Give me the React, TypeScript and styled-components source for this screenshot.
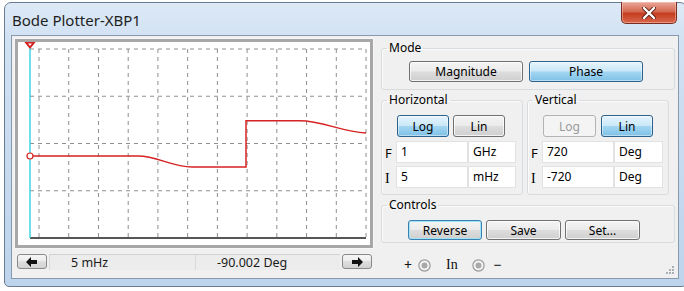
import React from 'react';
import styled, { createGlobalStyle } from 'styled-components';

type Variant = 'normal' | 'active' | 'disabled' | 'default';

const GlobalStyle = createGlobalStyle`
  html, body {
    margin: 0;
    padding: 0;
    background: #ffffff;
    overflow: hidden;
  }
  body {
    width: 684px;
    height: 291px;
  }
`;

const Window = styled.div`
  margin: 2px 0 0 4px;
  width: 683px;
  height: 285px;
  box-sizing: border-box;
  border: 1px solid #6a7c90;
  border-radius: 7px 7px 5px 5px;
  background: linear-gradient(180deg, #dde9f6 0%, #d0e1f3 14%, #bdd4ec 100%);
  display: flex;
  flex-direction: column;
  font-family: 'Noto Sans', 'Open Sans', sans-serif;
  color: #000;
`;

const TitleBar = styled.div`
  height: 32px;
  display: flex;
  align-items: flex-start;
`;

const Title = styled.div`
  margin: 7px 0 0 7px;
  font-size: 15px;
  line-height: 20px;
  color: #1e1e1e;
`;

const CloseButton = styled.div`
  margin: -1px 9px 0 auto;
  width: 56px;
  height: 22px;
  box-sizing: border-box;
  border: 1px solid #7a2d1f;
  border-top: none;
  border-radius: 0 0 5px 5px;
  background: linear-gradient(180deg, #e9a899 0%, #d46a52 45%, #c43d20 55%, #d9684c 100%);
  box-shadow: inset 0 0 0 1px rgba(255, 210, 200, 0.45);
  display: flex;
  align-items: center;
  justify-content: center;
`;

const Client = styled.div`
  margin: 0 7px 0 6px;
  height: 244px;
  box-sizing: border-box;
  border: 1px solid #8799ad;
  background: #f0f0f0;
  display: flex;
  padding: 3px;
`;

const PlotColumn = styled.div`
  width: 358px;
  display: flex;
  flex-direction: column;
`;

const PlotBox = styled.div`
  height: 209px;
  box-sizing: border-box;
  border: 3px solid #a7a7a7;
  background: #ffffff;
  box-shadow: 0 0 0 1px #f7f7f7;
`;

const BottomBar = styled.div`
  margin: 6px 0 0 2px;
  height: 16px;
  display: flex;
  gap: 2px;
`;

const ArrowButton = styled.div`
  width: 30px;
  height: 15px;
  box-sizing: border-box;
  border: 1px solid #8a8a8a;
  border-radius: 3px;
  background: linear-gradient(180deg, #f6f6f6 0%, #ececec 50%, #dedede 50%, #d2d2d2 100%);
  display: flex;
  align-items: center;
  justify-content: center;
`;

const ReadoutGroup = styled.div`
  display: flex;
`;

const Readout = styled.div<{ $w: number }>`
  width: ${({ $w }) => $w}px;
  height: 16px;
  box-sizing: border-box;
  border-top: 1px solid #d2d2d2;
  border-left: 1px solid #d9d9d9;
  background: #ececec;
  padding-left: 21px;
  font-size: 12.5px;
  line-height: 15px;
  color: #1a1a1a;
`;

const ControlColumn = styled.div`
  width: 296px;
  margin: 2px 0 0 8px;
  display: flex;
  flex-direction: column;
`;

const Group = styled.fieldset<{ $mt?: number; $w?: number }>`
  margin: ${({ $mt }) => $mt ?? 0}px 0 0 0;
  padding: 0 4px 0 2px;
  ${({ $w }) => ($w ? `width: ${$w}px;` : '')}
  box-sizing: border-box;
  border: 1px solid #d6dce0;
  border-radius: 3px;
  box-shadow: inset 1px 1px 0 #fbfbfb;
  min-width: 0;
`;

const Legend = styled.legend`
  margin-left: 3px;
  padding: 0 2px;
  font-size: 12px;
  line-height: 14px;
`;

const ButtonRow = styled.div<{ $mt: number; $mb: number; $ml: number; $gap: number }>`
  display: flex;
  gap: ${({ $gap }) => $gap}px;
  margin: ${({ $mt, $mb, $ml }) => `${$mt}px 0 ${$mb}px ${$ml}px`};
`;

const variantStyles: Record<Variant, string> = {
  normal: `
    border-color: #707070;
    background: linear-gradient(180deg, #f4f4f4 0%, #ebebeb 48%, #dddddd 52%, #cfcfcf 100%);
    box-shadow: inset 0 0 0 1px rgba(255,255,255,0.75);
    color: #000;
  `,
  default: `
    border-color: #3c7fb1;
    background: linear-gradient(180deg, #f4f4f4 0%, #ebebeb 48%, #dddddd 52%, #cfcfcf 100%);
    box-shadow: inset 0 0 0 1px #9fe3f8;
    color: #000;
  `,
  active: `
    border-color: #2c628b;
    background: linear-gradient(180deg, #e6f5fd 0%, #c9e8f8 48%, #a3d6f2 52%, #7fc1e6 100%);
    box-shadow: inset 0 0 0 1px rgba(255,255,255,0.45);
    color: #000;
  `,
  disabled: `
    border-color: #b0b4b7;
    background: #f4f4f4;
    box-shadow: none;
    color: #9a9a9a;
  `,
};

const Button = styled.div<{ $variant: Variant; $w: number; $h: number }>`
  width: ${({ $w }) => $w}px;
  height: ${({ $h }) => $h}px;
  box-sizing: border-box;
  border: 1px solid;
  border-radius: 3px;
  display: flex;
  align-items: center;
  justify-content: center;
  font-size: 12px;
  ${({ $variant }) => variantStyles[$variant]}
`;

const AxisRow = styled.div`
  display: flex;
`;

const ScaleGroups = styled.div`
  margin-top: 3px;
  display: flex;
  gap: 4px;
`;

const FieldRow = styled.div<{ $mt: number }>`
  margin-top: ${({ $mt }) => $mt}px;
  display: flex;
  height: 22px;
`;

const RowLabel = styled.div<{ $serif?: boolean }>`
  width: 12px;
  padding-left: 1px;
  box-sizing: border-box;
  font-family: ${({ $serif }) => ($serif ? "'Liberation Serif', serif" : "'Noto Sans', sans-serif")};
  font-size: ${({ $serif }) => ($serif ? 14 : 13)}px;
  line-height: ${({ $serif }) => ($serif ? 26 : 24)}px;
`;

const TextBox = styled.div<{ $w: number }>`
  width: ${({ $w }) => $w}px;
  height: 22px;
  box-sizing: border-box;
  border: 1px solid #e2e2e2;
  background: #ffffff;
  padding-left: 4px;
  font-size: 12px;
  line-height: 19px;
`;

const TerminalRow = styled.div`
  margin-top: 12px;
  height: 20px;
  display: flex;
  align-items: center;
  padding-left: 23px;
`;

const TermText = styled.span<{ $ml: number; $serif?: boolean }>`
  margin-left: ${({ $ml }) => $ml}px;
  font-family: ${({ $serif }) => ($serif ? "'Liberation Serif', serif" : "'Noto Sans', sans-serif")};
  font-size: 14px;
  line-height: 20px;
  color: #111;
`;

const TermIcon = styled.svg<{ $ml: number }>`
  margin-left: ${({ $ml }) => $ml}px;
  display: block;
`;

const Grip = styled.svg`
  margin-left: auto;
  align-self: flex-end;
  display: block;
`;

const GRID_X = Array.from({ length: 12 }, (_, k) => 21 + k * 29.73);
const GRID_Y = [7, 54.25, 101.5, 148.75];

const Plot = () => (
  <svg width={352} height={203} style={{ display: 'block' }}>
    {GRID_X.map((x) => (
      <line key={x} x1={x} y1={7} x2={x} y2={196} stroke="#8f8f8f" strokeDasharray="4 4" />
    ))}
    {GRID_Y.map((y) => (
      <line key={y} x1={12} y1={y} x2={348} y2={y} stroke="#8f8f8f" strokeDasharray="4 4" />
    ))}
    <line x1={12} y1={196} x2={348} y2={196} stroke="#1e1e1e" strokeWidth={1.5} />
    <line x1={12} y1={1} x2={12} y2={196} stroke="#3fd3df" strokeWidth={1.5} />
    <path
      d="M12 114 H120 C139 114, 154 125, 174 125 H228 V78.7 H282 C304 78.7, 324 90, 348 91"
      fill="none"
      stroke="#d62222"
      strokeWidth={1.5}
    />
    <polygon points="8,0.5 16,0.5 12,5.5" fill="#ffffff" stroke="#d62222" strokeWidth={2} />
    <circle cx={12} cy={114} r={3} fill="#ffffff" stroke="#d62222" strokeWidth={1.2} />
  </svg>
);

const Arrow = ({ dir }: { dir: 'left' | 'right' }) => (
  <svg width={12} height={10} viewBox="0 0 12 10">
    <polygon
      points={dir === 'left' ? '0,5 5,0 5,3 11,3 11,7 5,7 5,10' : '12,5 7,0 7,3 1,3 1,7 7,7 7,10'}
      fill="#111"
    />
  </svg>
);

const Terminal = ({ ml }: { ml: number }) => (
  <TermIcon $ml={ml} width={13} height={13} viewBox="0 0 13 13">
    <circle cx={6.5} cy={6.5} r={5.6} fill="#f4f4f4" stroke="#9a9a9a" strokeWidth={1.2} />
    <circle cx={6.5} cy={6.5} r={3} fill="#a9a9a9" />
  </TermIcon>
);

export default function App() {
  return (
    <>
      <GlobalStyle />
      <Window>
        <TitleBar>
          <Title>Bode Plotter-XBP1</Title>
          <CloseButton>
            <svg width={14} height={12} viewBox="0 0 14 12">
              <path d="M2 1 L12 11 M12 1 L2 11" stroke="#5a1d12" strokeWidth={4} strokeLinecap="round" />
              <path d="M2 1 L12 11 M12 1 L2 11" stroke="#ffffff" strokeWidth={2.4} strokeLinecap="round" />
            </svg>
          </CloseButton>
        </TitleBar>
        <Client>
          <PlotColumn>
            <PlotBox>
              <Plot />
            </PlotBox>
            <BottomBar>
              <ArrowButton>
                <Arrow dir="left" />
              </ArrowButton>
              <ReadoutGroup>
                <Readout $w={146}>5 mHz</Readout>
                <Readout $w={145}>-90.002 Deg</Readout>
              </ReadoutGroup>
              <ArrowButton>
                <Arrow dir="right" />
              </ArrowButton>
            </BottomBar>
          </PlotColumn>

          <ControlColumn>
            <Group>
              <Legend>Mode</Legend>
              <ButtonRow $mt={6} $mb={7} $ml={25} $gap={6}>
                <Button $variant="normal" $w={114} $h={21}>Magnitude</Button>
                <Button $variant="active" $w={114} $h={21}>Phase</Button>
              </ButtonRow>
            </Group>

            <ScaleGroups>
              <Group $w={142}>
                <Legend>Horizontal</Legend>
                <ButtonRow $mt={8} $mb={0} $ml={13} $gap={4}>
                  <Button $variant="active" $w={52} $h={22}>Log</Button>
                  <Button $variant="normal" $w={52} $h={22}>Lin</Button>
                </ButtonRow>
                <FieldRow $mt={4}>
                  <RowLabel>F</RowLabel>
                  <TextBox $w={72}>1</TextBox>
                  <TextBox $w={48}>GHz</TextBox>
                </FieldRow>
                <FieldRow $mt={3} style={{ marginBottom: 6 }}>
                  <RowLabel $serif>I</RowLabel>
                  <TextBox $w={72}>5</TextBox>
                  <TextBox $w={48}>mHz</TextBox>
                </FieldRow>
              </Group>
              <Group $w={142}>
                <Legend>Vertical</Legend>
                <ButtonRow $mt={8} $mb={0} $ml={13} $gap={5}>
                  <Button $variant="disabled" $w={53} $h={22}>Log</Button>
                  <Button $variant="active" $w={52} $h={22}>Lin</Button>
                </ButtonRow>
                <AxisRow>
                  <FieldRow $mt={4}>
                    <RowLabel>F</RowLabel>
                    <TextBox $w={72}>720</TextBox>
                    <TextBox $w={49}>Deg</TextBox>
                  </FieldRow>
                </AxisRow>
                <FieldRow $mt={3} style={{ marginBottom: 6 }}>
                  <RowLabel $serif>I</RowLabel>
                  <TextBox $w={72}>-720</TextBox>
                  <TextBox $w={49}>Deg</TextBox>
                </FieldRow>
              </Group>
            </ScaleGroups>

            <Group $mt={3}>
              <Legend>Controls</Legend>
              <ButtonRow $mt={8} $mb={2} $ml={24} $gap={4}>
                <Button $variant="default" $w={74} $h={20}>Reverse</Button>
                <Button $variant="normal" $w={75} $h={20}>Save</Button>
                <Button $variant="normal" $w={75} $h={20}>Set...</Button>
              </ButtonRow>
            </Group>

            <TerminalRow>
              <TermText $ml={0}>+</TermText>
              <Terminal ml={6} />
              <TermText $ml={15} $serif>In</TermText>
              <Terminal ml={14} />
              <TermText $ml={9}>−</TermText>
              <Grip width={10} height={10} viewBox="0 0 10 10">
                {[
                  [8, 2],
                  [8, 5],
                  [5, 5],
                  [8, 8],
                  [5, 8],
                  [2, 8],
                ].map(([x, y]) => (
                  <rect key={`${x}-${y}`} x={x - 1} y={y - 1} width={2} height={2} fill="#a8b0b8" />
                ))}
              </Grip>
            </TerminalRow>
          </ControlColumn>
        </Client>
      </Window>
    </>
  );
}
